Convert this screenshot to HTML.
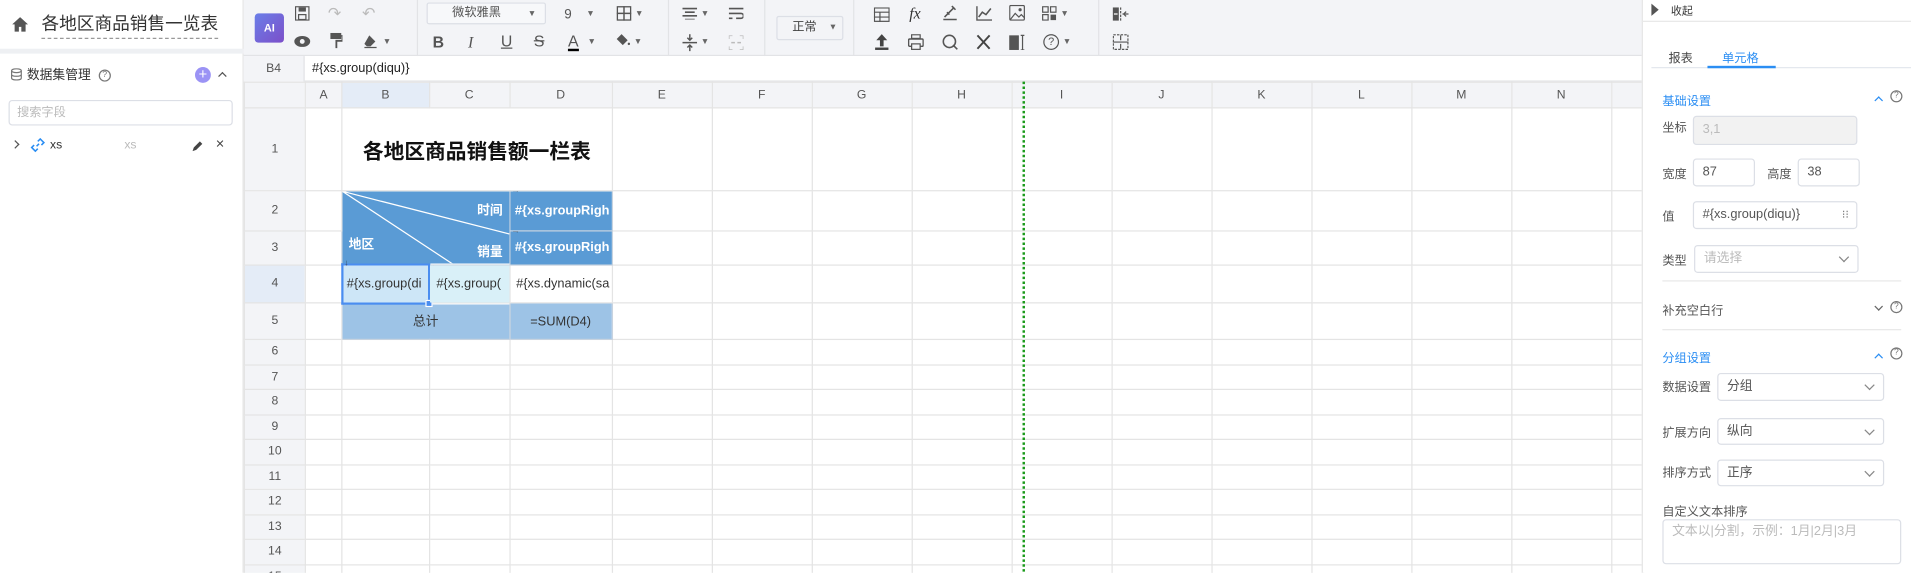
<!DOCTYPE html>
<html><head><meta charset="utf-8">
<style>
*{box-sizing:border-box;margin:0;padding:0}
body{width:1911px;height:573px;overflow:hidden;background:#fff;font-family:"Liberation Sans","Noto Sans CJK SC",sans-serif;color:#333}
#w{position:absolute;left:0;top:0;width:1568px;height:470px;transform:scale(1.21875);transform-origin:0 0;overflow:hidden}
.a{position:absolute}
.tb{position:absolute;left:200px;top:0;width:1147px;height:46px;background:#f3f4f7;border-bottom:1px solid #e2e3e6}
.ic{position:absolute;font-size:13px;color:#555;line-height:14px}
.sep{position:absolute;top:0;width:1px;height:46px;background:#e2e3e6}
.dd{position:absolute;font-size:7px;color:#666}
table{position:absolute;left:200px;top:67px;border-collapse:collapse;table-layout:fixed;font-size:10.5px}
td{border:1px solid #e4e4e4;overflow:hidden;white-space:nowrap;padding:0;text-align:center;color:#333}
tr.h td{background:#f3f4f7;color:#555;font-size:10px}
td.rh{background:#f3f4f7;color:#555;font-size:10px}
.lbl{position:absolute;font-size:10px;color:#555}
.inp{position:absolute;border:1px solid #dcdfe6;border-radius:3px;background:#fff;font-size:10.5px;color:#555;padding-left:7px;line-height:21px}
.chev{position:absolute;right:8px;top:6px;width:6px;height:6px;border-right:1px solid #888;border-bottom:1px solid #888;transform:rotate(45deg)}
.blue{color:#2b8ef3;font-size:10px}
.q{position:absolute;width:10px;height:10px;border:1px solid #777;border-radius:50%;font-size:7px;line-height:8px;text-align:center;color:#777}
</style></head><body><div id="w">

<!-- left panel -->
<div class="a" style="left:0;top:0;width:200px;height:470px;background:#fff;border-right:1px solid #e4e4e4"></div>
<div class="a" style="left:0;top:40px;width:200px;height:4px;background:#eef0f3"></div>
<svg class="a" style="left:10px;top:14px" width="13" height="12" viewBox="0 0 13 12"><path d="M6.5 0L0 6h2v6h3.5V8h2v4H11V6h2z" fill="#555"/></svg>
<div class="a" style="left:34px;top:12px;font-size:14.5px;color:#333;border-bottom:1px dashed #999;padding-bottom:2px;line-height:17px">各地区商品销售一览表</div>
<svg class="a" style="left:9px;top:56px" width="9" height="10" viewBox="0 0 9 10"><ellipse cx="4.5" cy="2" rx="4" ry="1.6" fill="none" stroke="#777"/><path d="M.5 2v6c0 1 1.8 1.6 4 1.6s4-.6 4-1.6V2M.5 5c0 1 1.8 1.6 4 1.6s4-.6 4-1.6" fill="none" stroke="#777"/></svg>
<div class="a" style="left:22px;top:54px;font-size:10.5px;color:#333">数据集管理</div>
<div class="q" style="left:81px;top:57px">?</div>
<div class="a" style="left:160px;top:55px;width:13px;height:13px;border-radius:50%;background:#9b93f5;color:#fff;font-size:12px;line-height:12px;text-align:center">+</div>
<div class="a" style="left:180px;top:60px;width:5px;height:5px;border-left:1px solid #555;border-top:1px solid #555;transform:rotate(45deg)"></div>
<div class="a" style="left:7px;top:82px;width:184px;height:21px;border:1px solid #dcdfe6;border-radius:3px;font-size:10px;color:#bbb;padding-left:6px;line-height:19px">搜索字段</div>
<div class="a" style="left:10px;top:116px;width:5px;height:5px;border-right:1px solid #555;border-top:1px solid #555;transform:rotate(45deg)"></div>
<svg class="a" style="left:25px;top:113px" width="12" height="12" viewBox="0 0 12 12"><path d="M5 7L7 5M3 6l-2 2 3 3 2-2M9 6l2-2-3-3-2 2" fill="none" stroke="#2b8ef3" stroke-width="1.3"/></svg>
<div class="a" style="left:41px;top:114px;font-size:10px;color:#333">xs</div>
<div class="a" style="left:102px;top:114px;font-size:10px;color:#bbb">xs</div>
<svg class="a" style="left:157px;top:115px" width="10" height="10" viewBox="0 0 10 10"><path d="M1 9l1-3 5-5 2 2-5 5z" fill="#444"/></svg>
<div class="a" style="left:177px;top:111px;font-size:12px;color:#444">×</div>

<!-- toolbar -->
<div class="tb"></div>
<div class="a" style="left:209px;top:11px;width:24px;height:24px;border-radius:3px;background:linear-gradient(135deg,#6a7ee8,#7c4fc9);color:#fff;font-size:9px;font-weight:bold;text-align:center;line-height:24px">AI</div>
<svg class="a" style="left:242px;top:5px" width="12" height="12" viewBox="0 0 12 12"><rect x=".5" y=".5" width="11" height="11" fill="none" stroke="#555"/><rect x="3" y="1" width="6" height="3.5" fill="#555"/><rect x="3" y="7" width="6" height="4" fill="none" stroke="#555"/></svg>
<div class="ic" style="left:269px;top:4px;color:#bbb">↷</div>
<div class="ic" style="left:297px;top:4px;color:#bbb">↶</div>
<svg class="a" style="left:241px;top:29px" width="14" height="10" viewBox="0 0 14 10"><ellipse cx="7" cy="5" rx="6.5" ry="4.5" fill="#555"/><circle cx="7" cy="5" r="2" fill="#f3f4f7"/></svg>
<svg class="a" style="left:271px;top:27px" width="10" height="13" viewBox="0 0 10 13"><rect x="0" y="0" width="9" height="5" fill="#555"/><path d="M9 2.5h1v4H5v6" fill="none" stroke="#555" stroke-width="1.5"/></svg>
<svg class="a" style="left:298px;top:28px" width="12" height="12" viewBox="0 0 12 12"><path d="M5 1l5 5-4 4H3L1 8z" fill="#555"/><path d="M1 11h10" stroke="#555"/></svg>
<div class="dd" style="left:314px;top:31px">▼</div>
<div class="sep" style="left:342px"></div>
<div class="a" style="left:350px;top:2px;width:98px;height:18px;border:1px solid #dcdfe6;border-radius:2px;background:#f7f8fa;font-size:10px;color:#555;line-height:16px;padding-left:20px">微软雅黑</div>
<div class="dd" style="left:433px;top:8px">▼</div>
<div class="ic" style="left:463px;top:5px;font-size:11px">9</div>
<div class="dd" style="left:481px;top:8px">▼</div>
<svg class="a" style="left:506px;top:5px" width="12" height="12" viewBox="0 0 12 12"><rect x=".5" y=".5" width="11" height="11" fill="none" stroke="#555" stroke-width="1.2"/><path d="M6 0v12M0 6h12" stroke="#555" stroke-width="1.2"/></svg>
<div class="dd" style="left:521px;top:8px">▼</div>
<div class="ic" style="left:355px;top:28px;font-weight:bold;font-size:13px">B</div>
<div class="ic" style="left:384px;top:28px;font-style:italic;font-size:13px;font-family:'Liberation Serif'">I</div>
<div class="ic" style="left:411px;top:27px;text-decoration:underline;font-size:13px">U</div>
<div class="ic" style="left:438px;top:27px;text-decoration:line-through;font-size:13px">S</div>
<div class="ic" style="left:466px;top:27px;font-size:13px;border-bottom:2px solid #000;line-height:13px">A</div>
<div class="dd" style="left:482px;top:31px">▼</div>
<svg class="a" style="left:505px;top:27px" width="12" height="13" viewBox="0 0 12 13"><path d="M5 1l5 5-4 4-5-5z" fill="#555"/><circle cx="11" cy="9" r="1" fill="#555"/></svg>
<div class="dd" style="left:520px;top:31px">▼</div>
<div class="sep" style="left:548px"></div>
<svg class="a" style="left:560px;top:6px" width="12" height="10" viewBox="0 0 12 10"><path d="M0 1h12M2 4h8M0 7h12M2 10h8" stroke="#555" stroke-width="1.3"/></svg>
<div class="dd" style="left:575px;top:8px">▼</div>
<svg class="a" style="left:598px;top:6px" width="12" height="10" viewBox="0 0 12 10"><path d="M0 1h12M0 5h10a2 2 0 010 4H6M0 9h3" fill="none" stroke="#555" stroke-width="1.3"/></svg>
<svg class="a" style="left:560px;top:28px" width="12" height="14" viewBox="0 0 12 14"><path d="M0 7h12M6 0v5M4 3l2 2 2-2M6 14V9M4 11l2-2 2 2" fill="none" stroke="#555" stroke-width="1.2"/></svg>
<div class="dd" style="left:575px;top:31px">▼</div>
<svg class="a" style="left:598px;top:29px" width="12" height="12" viewBox="0 0 12 12"><path d="M0 3V0h3M9 0h3v3M12 9v3H9M3 12H0V9M2 6h3M7 6h3" fill="none" stroke="#bbb" stroke-width="1.2"/></svg>
<div class="sep" style="left:627px"></div>
<div class="a" style="left:637px;top:13px;width:55px;height:20px;border:1px solid #dcdfe6;border-radius:2px;font-size:10px;color:#444;line-height:18px;padding-left:12px">正常</div>
<div class="dd" style="left:680px;top:19px">▼</div>
<div class="sep" style="left:700px"></div>
<svg class="a" style="left:717px;top:6px" width="13" height="12" viewBox="0 0 13 12"><rect x=".5" y=".5" width="12" height="11" fill="none" stroke="#555"/><path d="M0 4h13M0 8h13M5 4v8" stroke="#555"/></svg>
<div class="ic" style="left:746px;top:4px;font-style:italic;font-family:'Liberation Serif';font-size:13px;color:#333">fx</div>
<svg class="a" style="left:773px;top:4px" width="13" height="13" viewBox="0 0 13 13"><path d="M1 12h11M2 10l8-8M8 1l3 3M4 6l2 2" stroke="#555" stroke-width="1.3"/></svg>
<svg class="a" style="left:801px;top:5px" width="13" height="12" viewBox="0 0 13 12"><path d="M.5 0v11.5H13M2 9l3-4 3 2 4-5" fill="none" stroke="#555" stroke-width="1.3"/></svg>
<svg class="a" style="left:828px;top:4px" width="13" height="13" viewBox="0 0 13 13"><rect x=".5" y=".5" width="12" height="12" rx="1" fill="none" stroke="#555"/><path d="M1 12l4-5 3 3 2-2 3 3" fill="none" stroke="#555"/><circle cx="9" cy="4" r="1.3" fill="#555"/></svg>
<svg class="a" style="left:855px;top:5px" width="12" height="12" viewBox="0 0 12 12"><rect x=".5" y=".5" width="4.5" height="4.5" fill="none" stroke="#555"/><rect x="7" y=".5" width="4.5" height="4.5" fill="none" stroke="#555"/><rect x=".5" y="7" width="4.5" height="4.5" fill="none" stroke="#555"/><rect x="7" y="7" width="4.5" height="4.5" fill="#555"/></svg>
<div class="dd" style="left:870px;top:8px">▼</div>
<svg class="a" style="left:718px;top:28px" width="11" height="13" viewBox="0 0 11 13"><path d="M5.5 0L1 5h3v5h3V5h3z" fill="#444"/><rect x="0" y="11" width="11" height="2" fill="#444"/></svg>
<svg class="a" style="left:745px;top:28px" width="13" height="13" viewBox="0 0 13 13"><rect x="3" y=".5" width="7" height="3" fill="none" stroke="#555"/><rect x=".5" y="4" width="12" height="6" rx="1" fill="none" stroke="#555" stroke-width="1.2"/><rect x="3" y="8" width="7" height="4.5" fill="#f3f4f7" stroke="#555"/></svg>
<svg class="a" style="left:773px;top:28px" width="13" height="13" viewBox="0 0 13 13"><circle cx="6" cy="6" r="5" fill="none" stroke="#555" stroke-width="1.3"/><path d="M9 9l3.5 3.5" stroke="#555" stroke-width="1.3"/></svg>
<svg class="a" style="left:801px;top:28px" width="12" height="13" viewBox="0 0 12 13"><path d="M1 1l10 11M11 1L1 12" stroke="#444" stroke-width="1.6"/></svg>
<svg class="a" style="left:828px;top:28px" width="13" height="13" viewBox="0 0 13 13"><rect x="0" y="1" width="8" height="12" fill="#555"/><path d="M11 1v12M9.5 1h3M9.5 13h3" stroke="#555"/></svg>
<div class="q" style="left:856px;top:28px;width:13px;height:13px;font-size:9px;line-height:11px;color:#555;border-color:#555">?</div>
<div class="dd" style="left:872px;top:31px">▼</div>
<div class="sep" style="left:901px"></div>
<svg class="a" style="left:913px;top:6px" width="13" height="11" viewBox="0 0 13 11"><rect x="0" y="0" width="5" height="11" fill="#555"/><path d="M6.5 0v11" stroke="#555" stroke-dasharray="2 1"/><path d="M8 5.5h5M11 3.5l-2 2 2 2" fill="none" stroke="#555"/><path d="M1 5.5h3" stroke="#fff"/></svg>
<svg class="a" style="left:913px;top:28px" width="13" height="13" viewBox="0 0 13 13"><rect x=".5" y=".5" width="12" height="12" fill="none" stroke="#555" stroke-dasharray="2 1"/><path d="M0 6.5h13M6.5 1v4M6.5 8v4" stroke="#555"/></svg>

<!-- formula bar -->
<div class="a" style="left:200px;top:46px;width:1147px;height:21px;background:#fff;border-bottom:1px solid #e2e3e6"></div>
<div class="a" style="left:200px;top:46px;width:50px;height:21px;background:#f3f4f7;border-right:1px solid #e2e3e6;font-size:10px;color:#555;text-align:center;line-height:21px">B4</div>
<div class="a" style="left:256px;top:46px;font-size:10.5px;color:#222;line-height:21px">#{xs.group(diqu)}</div>

<!-- grid -->
<table>
<colgroup><col style="width:50px"><col style="width:30px"><col style="width:71.5px"><col style="width:66px"><col style="width:84px"><col style="width:82px"><col style="width:82px"><col style="width:82px"><col style="width:82px"><col style="width:82px"><col style="width:82px"><col style="width:82px"><col style="width:82px"><col style="width:82px"><col style="width:82px"><col style="width:26px"></colgroup>
<tr class="h" style="height:21px"><td></td><td>A</td><td style="background:#e4ecf7">B</td><td>C</td><td>D</td><td>E</td><td>F</td><td>G</td><td>H</td><td>I</td><td>J</td><td>K</td><td>L</td><td>M</td><td>N</td><td></td></tr>
<tr style="height:68px"><td class="rh">1</td><td></td><td colspan="3" style="font-size:17px;font-weight:bold;color:#111">各地区商品销售额一栏表</td><td></td><td></td><td></td><td></td><td></td><td></td><td></td><td></td><td></td><td></td><td></td></tr>
<tr style="height:32.5px"><td class="rh">2</td><td></td>
<td colspan="2" rowspan="2" style="background:#5a9bd5;position:relative;border-color:#c8d3df">
<svg style="position:absolute;left:0;top:0" width="137" height="60" viewBox="0 0 137 60"><path d="M0 0L137 35M0 0L91 60" stroke="#fff" stroke-width="1"/></svg>
<span style="position:absolute;right:5px;top:8px;color:#fff;font-size:10.5px;font-weight:bold">时间</span>
<span style="position:absolute;right:5px;top:42px;color:#fff;font-size:10.5px;font-weight:bold">销量</span>
<span style="position:absolute;left:5px;top:36px;color:#fff;font-size:10.5px;font-weight:bold">地区</span>
</td>
<td style="background:#5a9bd5;color:#fff;font-weight:bold;text-align:left;padding-left:4px;border-color:#c8d3df;position:relative"><span style="position:absolute;left:1px;top:-4px;font-size:7px;color:#234">→</span>#{xs.groupRigh</td><td></td><td></td><td></td><td></td><td></td><td></td><td></td><td></td><td></td><td></td><td></td></tr>
<tr style="height:28px"><td class="rh">3</td><td></td><td style="background:#5a9bd5;color:#fff;font-weight:bold;text-align:left;padding-left:4px;border-color:#c8d3df;position:relative"><span style="position:absolute;left:1px;top:-4px;font-size:7px;color:#234">→</span>#{xs.groupRigh</td><td></td><td></td><td></td><td></td><td></td><td></td><td></td><td></td><td></td><td></td><td></td></tr>
<tr style="height:31.5px"><td class="rh" style="background:#e4ecf7">4</td><td></td>
<td style="background:#cde6f7;border:2px solid #4a8df0;text-align:left;padding-left:3px;position:relative;overflow:visible"><span style="position:absolute;left:1px;top:-5px;font-size:7px;color:#345">↓</span>#{xs.group(di<span style="position:absolute;right:-4px;bottom:-4px;width:6px;height:6px;background:#4a8df0;border:1px solid #fff"></span></td>
<td style="background:#d9f0f8;text-align:left;padding-left:5px;position:relative"><span style="position:absolute;left:1px;top:-5px;font-size:7px;color:#345">↓</span>#{xs.group(</td>
<td style="text-align:left;padding-left:5px">#{xs.dynamic(sa</td><td></td><td></td><td></td><td></td><td></td><td></td><td></td><td></td><td></td><td></td><td></td></tr>
<tr style="height:30px"><td class="rh">5</td><td></td><td colspan="2" style="background:#9dc3e6;border-color:#c8d3df">总计</td><td style="background:#9dc3e6;border-color:#c8d3df">=SUM(D4)</td><td></td><td></td><td></td><td></td><td></td><td></td><td></td><td></td><td></td><td></td><td></td></tr>
<tr style="height:20.5px"><td class="rh">6</td><td></td><td></td><td></td><td></td><td></td><td></td><td></td><td></td><td></td><td></td><td></td><td></td><td></td><td></td><td></td></tr>
<tr style="height:20.5px"><td class="rh">7</td><td></td><td></td><td></td><td></td><td></td><td></td><td></td><td></td><td></td><td></td><td></td><td></td><td></td><td></td><td></td></tr>
<tr style="height:20.5px"><td class="rh">8</td><td></td><td></td><td></td><td></td><td></td><td></td><td></td><td></td><td></td><td></td><td></td><td></td><td></td><td></td><td></td></tr>
<tr style="height:20.5px"><td class="rh">9</td><td></td><td></td><td></td><td></td><td></td><td></td><td></td><td></td><td></td><td></td><td></td><td></td><td></td><td></td><td></td></tr>
<tr style="height:20.5px"><td class="rh">10</td><td></td><td></td><td></td><td></td><td></td><td></td><td></td><td></td><td></td><td></td><td></td><td></td><td></td><td></td><td></td></tr>
<tr style="height:20.5px"><td class="rh">11</td><td></td><td></td><td></td><td></td><td></td><td></td><td></td><td></td><td></td><td></td><td></td><td></td><td></td><td></td><td></td></tr>
<tr style="height:20.5px"><td class="rh">12</td><td></td><td></td><td></td><td></td><td></td><td></td><td></td><td></td><td></td><td></td><td></td><td></td><td></td><td></td><td></td></tr>
<tr style="height:20.5px"><td class="rh">13</td><td></td><td></td><td></td><td></td><td></td><td></td><td></td><td></td><td></td><td></td><td></td><td></td><td></td><td></td><td></td></tr>
<tr style="height:20.5px"><td class="rh">14</td><td></td><td></td><td></td><td></td><td></td><td></td><td></td><td></td><td></td><td></td><td></td><td></td><td></td><td></td><td></td></tr>
<tr style="height:20.5px"><td class="rh">15</td><td></td><td></td><td></td><td></td><td></td><td></td><td></td><td></td><td></td><td></td><td></td><td></td><td></td><td></td><td></td></tr>
</table>
<div class="a" style="left:839px;top:67px;width:0;height:410px;border-left:2px dotted #1a9a1a"></div>

<!-- right panel -->
<div class="a" style="left:1347px;top:0;width:221px;height:470px;background:#fff;border-left:1px solid #e4e4e4"></div>
<div class="a" style="left:1347px;top:17px;width:221px;height:1px;background:#e8e8e8"></div>
<div class="a" style="left:1355px;top:3px;width:0;height:0;border-left:6px solid #555;border-top:5px solid transparent;border-bottom:5px solid transparent"></div>
<div class="a" style="left:1371px;top:2px;font-size:9px;color:#333">收起</div>
<div class="a" style="left:1369px;top:39px;font-size:10px;color:#444">报表</div>
<div class="a" style="left:1413px;top:39px;font-size:10px;color:#2b8ef3">单元格</div>
<div class="a" style="left:1355px;top:55px;width:213px;height:1px;background:#e4e7ed"></div>
<div class="a" style="left:1401px;top:54px;width:56px;height:2px;background:#2b8ef3"></div>

<div class="a blue" style="left:1364px;top:74px">基础设置</div>
<div class="a" style="left:1539px;top:80px;width:5px;height:5px;border-left:1px solid #2b8ef3;border-top:1px solid #2b8ef3;transform:rotate(45deg)"></div>
<div class="q" style="left:1551px;top:74px">?</div>
<div class="lbl" style="left:1364px;top:96px">坐标</div>
<div class="inp" style="left:1389px;top:95px;width:135px;height:24px;background:#f2f2f2;color:#bbb">3,1</div>
<div class="lbl" style="left:1364px;top:134px">宽度</div>
<div class="inp" style="left:1389px;top:130px;width:51px;height:23px">87</div>
<div class="lbl" style="left:1450px;top:134px">高度</div>
<div class="inp" style="left:1475px;top:130px;width:51px;height:23px">38</div>
<div class="lbl" style="left:1364px;top:169px">值</div>
<div class="inp" style="left:1389px;top:165px;width:135px;height:23px">#{xs.group(diqu)}<span style="position:absolute;right:6px;top:0;font-size:9px;color:#777">⁝⁝</span></div>
<div class="lbl" style="left:1364px;top:205px">类型</div>
<div class="inp" style="left:1390px;top:201px;width:135px;height:23px;color:#bbb">请选择<div class="chev"></div></div>
<div class="a" style="left:1364px;top:230px;width:196px;height:1px;background:#e8e8e8"></div>
<div class="lbl" style="left:1364px;top:246px">补充空白行</div>
<div class="a" style="left:1539px;top:249px;width:5px;height:5px;border-right:1px solid #666;border-bottom:1px solid #666;transform:rotate(45deg)"></div>
<div class="q" style="left:1551px;top:247px">?</div>
<div class="a" style="left:1364px;top:270px;width:196px;height:1px;background:#e8e8e8"></div>
<div class="a blue" style="left:1364px;top:285px">分组设置</div>
<div class="a" style="left:1539px;top:291px;width:5px;height:5px;border-left:1px solid #2b8ef3;border-top:1px solid #2b8ef3;transform:rotate(45deg)"></div>
<div class="q" style="left:1551px;top:285px">?</div>
<div class="lbl" style="left:1364px;top:309px">数据设置</div>
<div class="inp" style="left:1409px;top:306px;width:137px;height:23px">分组<div class="chev"></div></div>
<div class="lbl" style="left:1364px;top:346px">扩展方向</div>
<div class="inp" style="left:1409px;top:343px;width:137px;height:22px">纵向<div class="chev"></div></div>
<div class="lbl" style="left:1364px;top:379px">排序方式</div>
<div class="inp" style="left:1409px;top:377px;width:137px;height:22px">正序<div class="chev"></div></div>
<div class="lbl" style="left:1364px;top:411px">自定义文本排序</div>
<div class="inp" style="left:1364px;top:426px;width:196px;height:37px;color:#bbb;line-height:18px">文本以|分割，示例：1月|2月|3月</div>
</div></body></html>
